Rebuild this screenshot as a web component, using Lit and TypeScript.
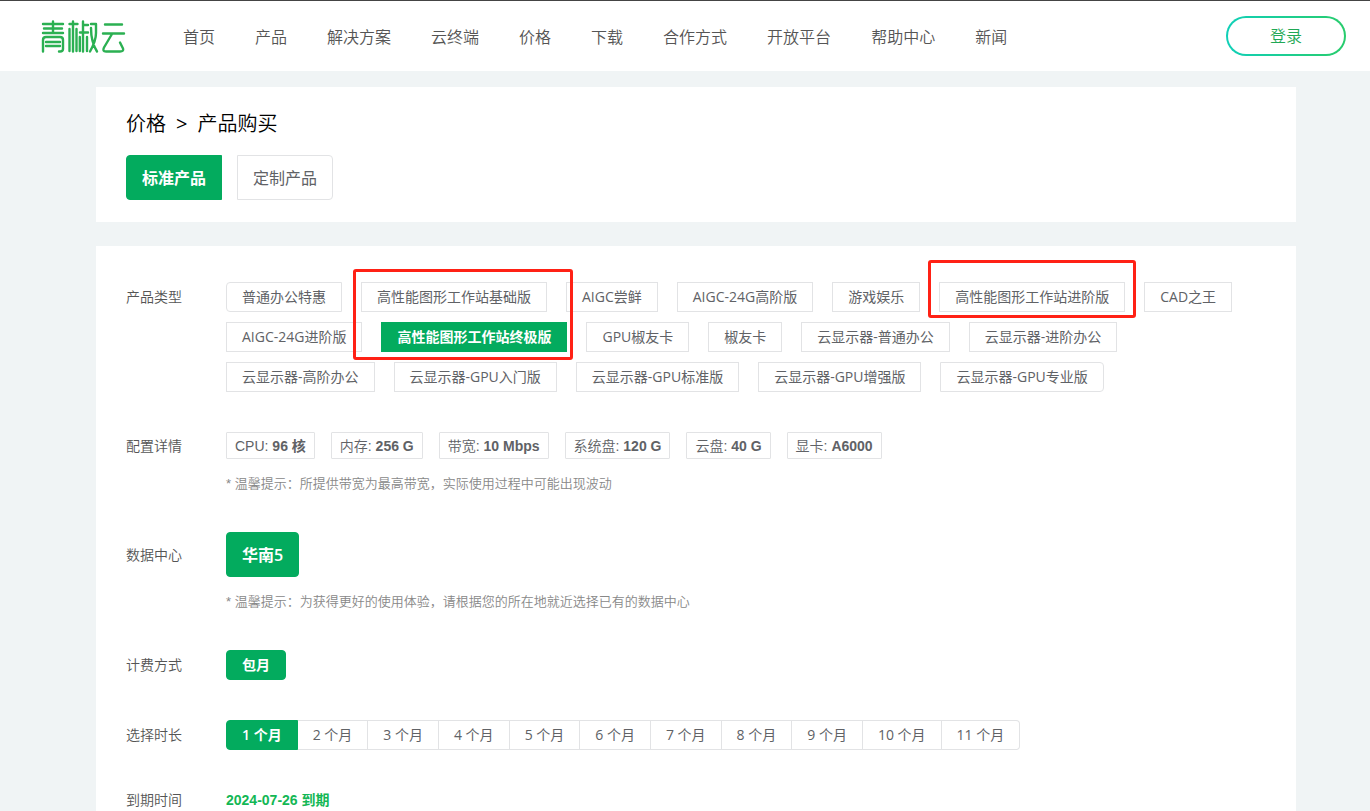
import { LitElement, html, css, svg } from "lit";
import { customElement, state } from "lit/decorators.js";
import { classMap } from "lit/directives/class-map.js";

const NAV = ["首页", "产品", "解决方案", "云终端", "价格", "下载", "合作方式", "开放平台", "帮助中心", "新闻"];

const TYPES: { name: string; marked?: "group" | "single" }[][] = [
  [
    { name: "普通办公特惠" },
    { name: "高性能图形工作站基础版" },
    { name: "AIGC尝鲜" },
    { name: "AIGC-24G高阶版" },
    { name: "游戏娱乐" },
    { name: "高性能图形工作站进阶版", marked: "single" },
    { name: "CAD之王" },
  ],
  [
    { name: "AIGC-24G进阶版" },
    { name: "高性能图形工作站终极版", marked: "group" },
    { name: "GPU椒友卡" },
    { name: "椒友卡" },
    { name: "云显示器-普通办公" },
    { name: "云显示器-进阶办公" },
  ],
  [
    { name: "云显示器-高阶办公" },
    { name: "云显示器-GPU入门版" },
    { name: "云显示器-GPU标准版" },
    { name: "云显示器-GPU增强版" },
    { name: "云显示器-GPU专业版" },
  ],
];

const SPECS = [
  ["CPU", "96 核"],
  ["内存", "256 G"],
  ["带宽", "10 Mbps"],
  ["系统盘", "120 G"],
  ["云盘", "40 G"],
  ["显卡", "A6000"],
];

const MONTHS = Array.from({ length: 11 }, (_, i) => `${i + 1} 个月`);

const logo = svg`
  <g fill="none" stroke="#2bb052" stroke-width="2.4" stroke-linecap="round" stroke-linejoin="round">
    <path d="M13 1.500v11M3 4h20M4 8.500h18M3 13h20M3 31.500V20q0-3 3-3h14q3 0 3 3v9q0 2.500-3 2.500h-1M6 22h14M6 26h14"/>
    <path d="M33 1.500v30M29.500 4h8M29.500 9v22M36.500 9v22M43 1.500v30M43 5h5M40 12.500h8M39.800 17v14M47 17v14M51 4h5v9q0 8-6 18.500M51 8q0 14 6 23.500"/>
    <path d="M65 4.500h17M63 13.500h21M72 14L64 27.500q-2 4 2 4h14q4 0 3-3l-3-6"/>
  </g>`;

@customElement("app-root")
export class AppRoot extends LitElement {
  @state() private type = "高性能图形工作站终极版";
  @state() private month = MONTHS[0];
  @state() private category = "标准产品";

  static styles = css`
    :host {
      display: flex;
      flex-direction: column;
      min-height: 100vh;
      box-sizing: border-box;
      background: #f0f4f5;
      color: #606266;
      font-family: "Open Sans", "Noto Sans CJK SC", sans-serif;
      font-size: 14px;
      line-height: 20px;
    }
    * {
      box-sizing: border-box;
    }
    header {
      display: flex;
      align-items: center;
      justify-content: space-between;
      height: 71px;
      padding: 0 24px 0 40px;
      border-top: 1px solid #444;
      background: #fff;
    }
    .brand {
      display: flex;
    }
    .left {
      display: flex;
      align-items: center;
      gap: 56px;
    }
    nav {
      display: flex;
      gap: 40px;
      padding-top: 2px;
    }
    nav a {
      color: #555;
      font-size: 16px;
      font-weight: 350;
      line-height: 24px;
      text-decoration: none;
      white-space: nowrap;
    }
    .login {
      width: 120px;
      height: 40px;
      padding: 0;
      border: 2px solid transparent;
      border-radius: 20px;
      background: linear-gradient(#fff, #fff) padding-box, linear-gradient(90deg, #10d0b8, #28cc6c) border-box;
      color: #1fa855;
      font: inherit;
      font-size: 16px;
      font-weight: 350;
    }
    main {
      display: flex;
      flex: 1;
      flex-direction: column;
      gap: 24px;
      padding: 16px 74px 0 96px;
    }
    .card {
      padding: 23px 30px 22px;
      background: #fff;
    }
    h1 {
      display: flex;
      gap: 10px;
      margin: 0 0 17px;
      color: #000;
      font-size: 20px;
      font-weight: 350;
      line-height: 28px;
    }
    .sep {
      font-weight: 400;
    }
    .tabs {
      display: flex;
      gap: 15px;
    }
    .option {
      display: flex;
      align-items: center;
      height: 30px;
      padding: 0 15px;
      border: 1px solid #e2e3e5;
      background: #fff;
      white-space: nowrap;
      cursor: pointer;
    }
    .option input {
      appearance: none;
      width: 0;
      height: 0;
      margin: 0;
      outline: none;
    }
    .option.on {
      border-color: #03ab5e;
      background: #03ab5e;
      color: #fff;
      font-weight: 600;
    }
    .option.large {
      height: 45px;
      font-size: 16px;
    }
    .option.first {
      border-radius: 4px 0 0 4px;
    }
    .option.last {
      border-radius: 0 4px 4px 0;
    }
    .option.solo {
      border-radius: 4px;
    }
    .card.order {
      flex: 1;
      padding: 36px 30px 0;
    }
    .row {
      display: grid;
      grid-template-columns: 100px 1fr;
    }
    .row + .row {
      margin-top: 40px;
    }
    .label {
      color: #555;
      font-weight: 350;
      line-height: 30px;
    }
    .label.tall {
      line-height: 46px;
    }
    .label.chip {
      line-height: 27px;
    }
    .types {
      display: flex;
      flex-direction: column;
      gap: 10px;
    }
    .line {
      display: flex;
      gap: 19px;
    }
    .slot {
      position: relative;
    }
    .mark {
      position: absolute;
      border: 3px solid #ff2115;
      border-radius: 3px;
      pointer-events: none;
      z-index: 1;
    }
    .mark.group {
      inset: -53px -6px -8px -28px;
    }
    .mark.single {
      inset: -22px -11px -6px -11px;
    }
    .specs {
      display: flex;
      gap: 16px;
      margin: 0;
      padding: 0;
      list-style: none;
      font-family: "Liberation Sans", "Noto Sans CJK SC", sans-serif;
      font-weight: 350;
    }
    .specs li {
      height: 27px;
      padding: 0 8px;
      border: 1px solid #e2e3e5;
      border-radius: 1px;
      line-height: 27px;
      white-space: nowrap;
    }
    strong {
      font-weight: 700;
    }
    .hint {
      margin: 16px 0 0;
      color: #888;
      font-family: "Liberation Sans", "Noto Sans CJK SC", sans-serif;
      font-size: 13px;
      font-weight: 350;
      line-height: 17px;
    }
    .choices {
      display: flex;
    }
    .months .option + .option {
      border-left: 0;
    }
    .expiry {
      color: #13b755;
      font-family: "Liberation Sans", "Noto Sans CJK SC", sans-serif;
      font-weight: 700;
      line-height: 20px;
    }
    .label.text {
      line-height: 20px;
    }
  `;

  private option(group: string, name: string, current: string, shape: string[], pick: () => void) {
    const on = name === current;
    const classes: Record<string, boolean> = { option: true, on };
    for (const s of shape) classes[s] = true;
    return html`<label class=${classMap(classes)}
      ><input type="radio" name=${group} .checked=${on} @change=${pick} />${name}</label
    >`;
  }

  render() {
    return html`
      <header>
        <div class="left">
          <a class="brand" href="#" aria-label="青椒云">
            <svg width="87" height="36" viewBox="0 -2 87 36">${logo}</svg>
          </a>
          <nav>${NAV.map((n) => html`<a href="#">${n}</a>`)}</nav>
        </div>
        <button class="login" type="button">登录</button>
      </header>
      <main>
        <section class="card">
          <h1><span>价格</span><span class="sep">&gt;</span><span>产品购买</span></h1>
          <div class="tabs" role="radiogroup" aria-label="产品">
            ${this.option("category", "标准产品", this.category, ["large", "first"], () => (this.category = "标准产品"))}
            ${this.option("category", "定制产品", this.category, ["large", "last"], () => (this.category = "定制产品"))}
          </div>
        </section>
        <section class="card order">
          <div class="row">
            <span class="label" id="type">产品类型</span>
            <div class="types" role="radiogroup" aria-labelledby="type">
              ${TYPES.map(
                (line, r) => html`<div class="line">
                  ${line.map((t, i) => {
                    const shape =
                      r === 0 && i === 0 ? ["first"] : r === TYPES.length - 1 && i === line.length - 1 ? ["last"] : [];
                    return html`<div class="slot">
                      ${this.option("type", t.name, this.type, shape, () => (this.type = t.name))}
                      ${t.marked ? html`<div class="mark ${t.marked}"></div>` : ""}
                    </div>`;
                  })}
                </div>`
              )}
            </div>
          </div>
          <div class="row">
            <span class="label chip">配置详情</span>
            <div>
              <ul class="specs">
                ${SPECS.map(([k, v]) => html`<li>${k}: <strong>${v}</strong></li>`)}
              </ul>
              <p class="hint">* 温馨提示：所提供带宽为最高带宽，实际使用过程中可能出现波动</p>
            </div>
          </div>
          <div class="row">
            <span class="label tall" id="dc">数据中心</span>
            <div>
              <div class="choices" role="radiogroup" aria-labelledby="dc">
                ${this.option("dc", "华南5", "华南5", ["large", "solo"], () => {})}
              </div>
              <p class="hint">* 温馨提示：为获得更好的使用体验，请根据您的所在地就近选择已有的数据中心</p>
            </div>
          </div>
          <div class="row">
            <span class="label" id="billing">计费方式</span>
            <div class="choices" role="radiogroup" aria-labelledby="billing">
              ${this.option("billing", "包月", "包月", ["solo"], () => {})}
            </div>
          </div>
          <div class="row">
            <span class="label" id="months">选择时长</span>
            <div class="choices months" role="radiogroup" aria-labelledby="months">
              ${MONTHS.map((m, i) =>
                this.option(
                  "month",
                  m,
                  this.month,
                  i === 0 ? ["first"] : i === MONTHS.length - 1 ? ["last"] : [],
                  () => (this.month = m)
                )
              )}
            </div>
          </div>
          <div class="row">
            <span class="label text">到期时间</span>
            <span class="expiry">2024-07-26 到期</span>
          </div>
        </section>
      </main>
    `;
  }
}
